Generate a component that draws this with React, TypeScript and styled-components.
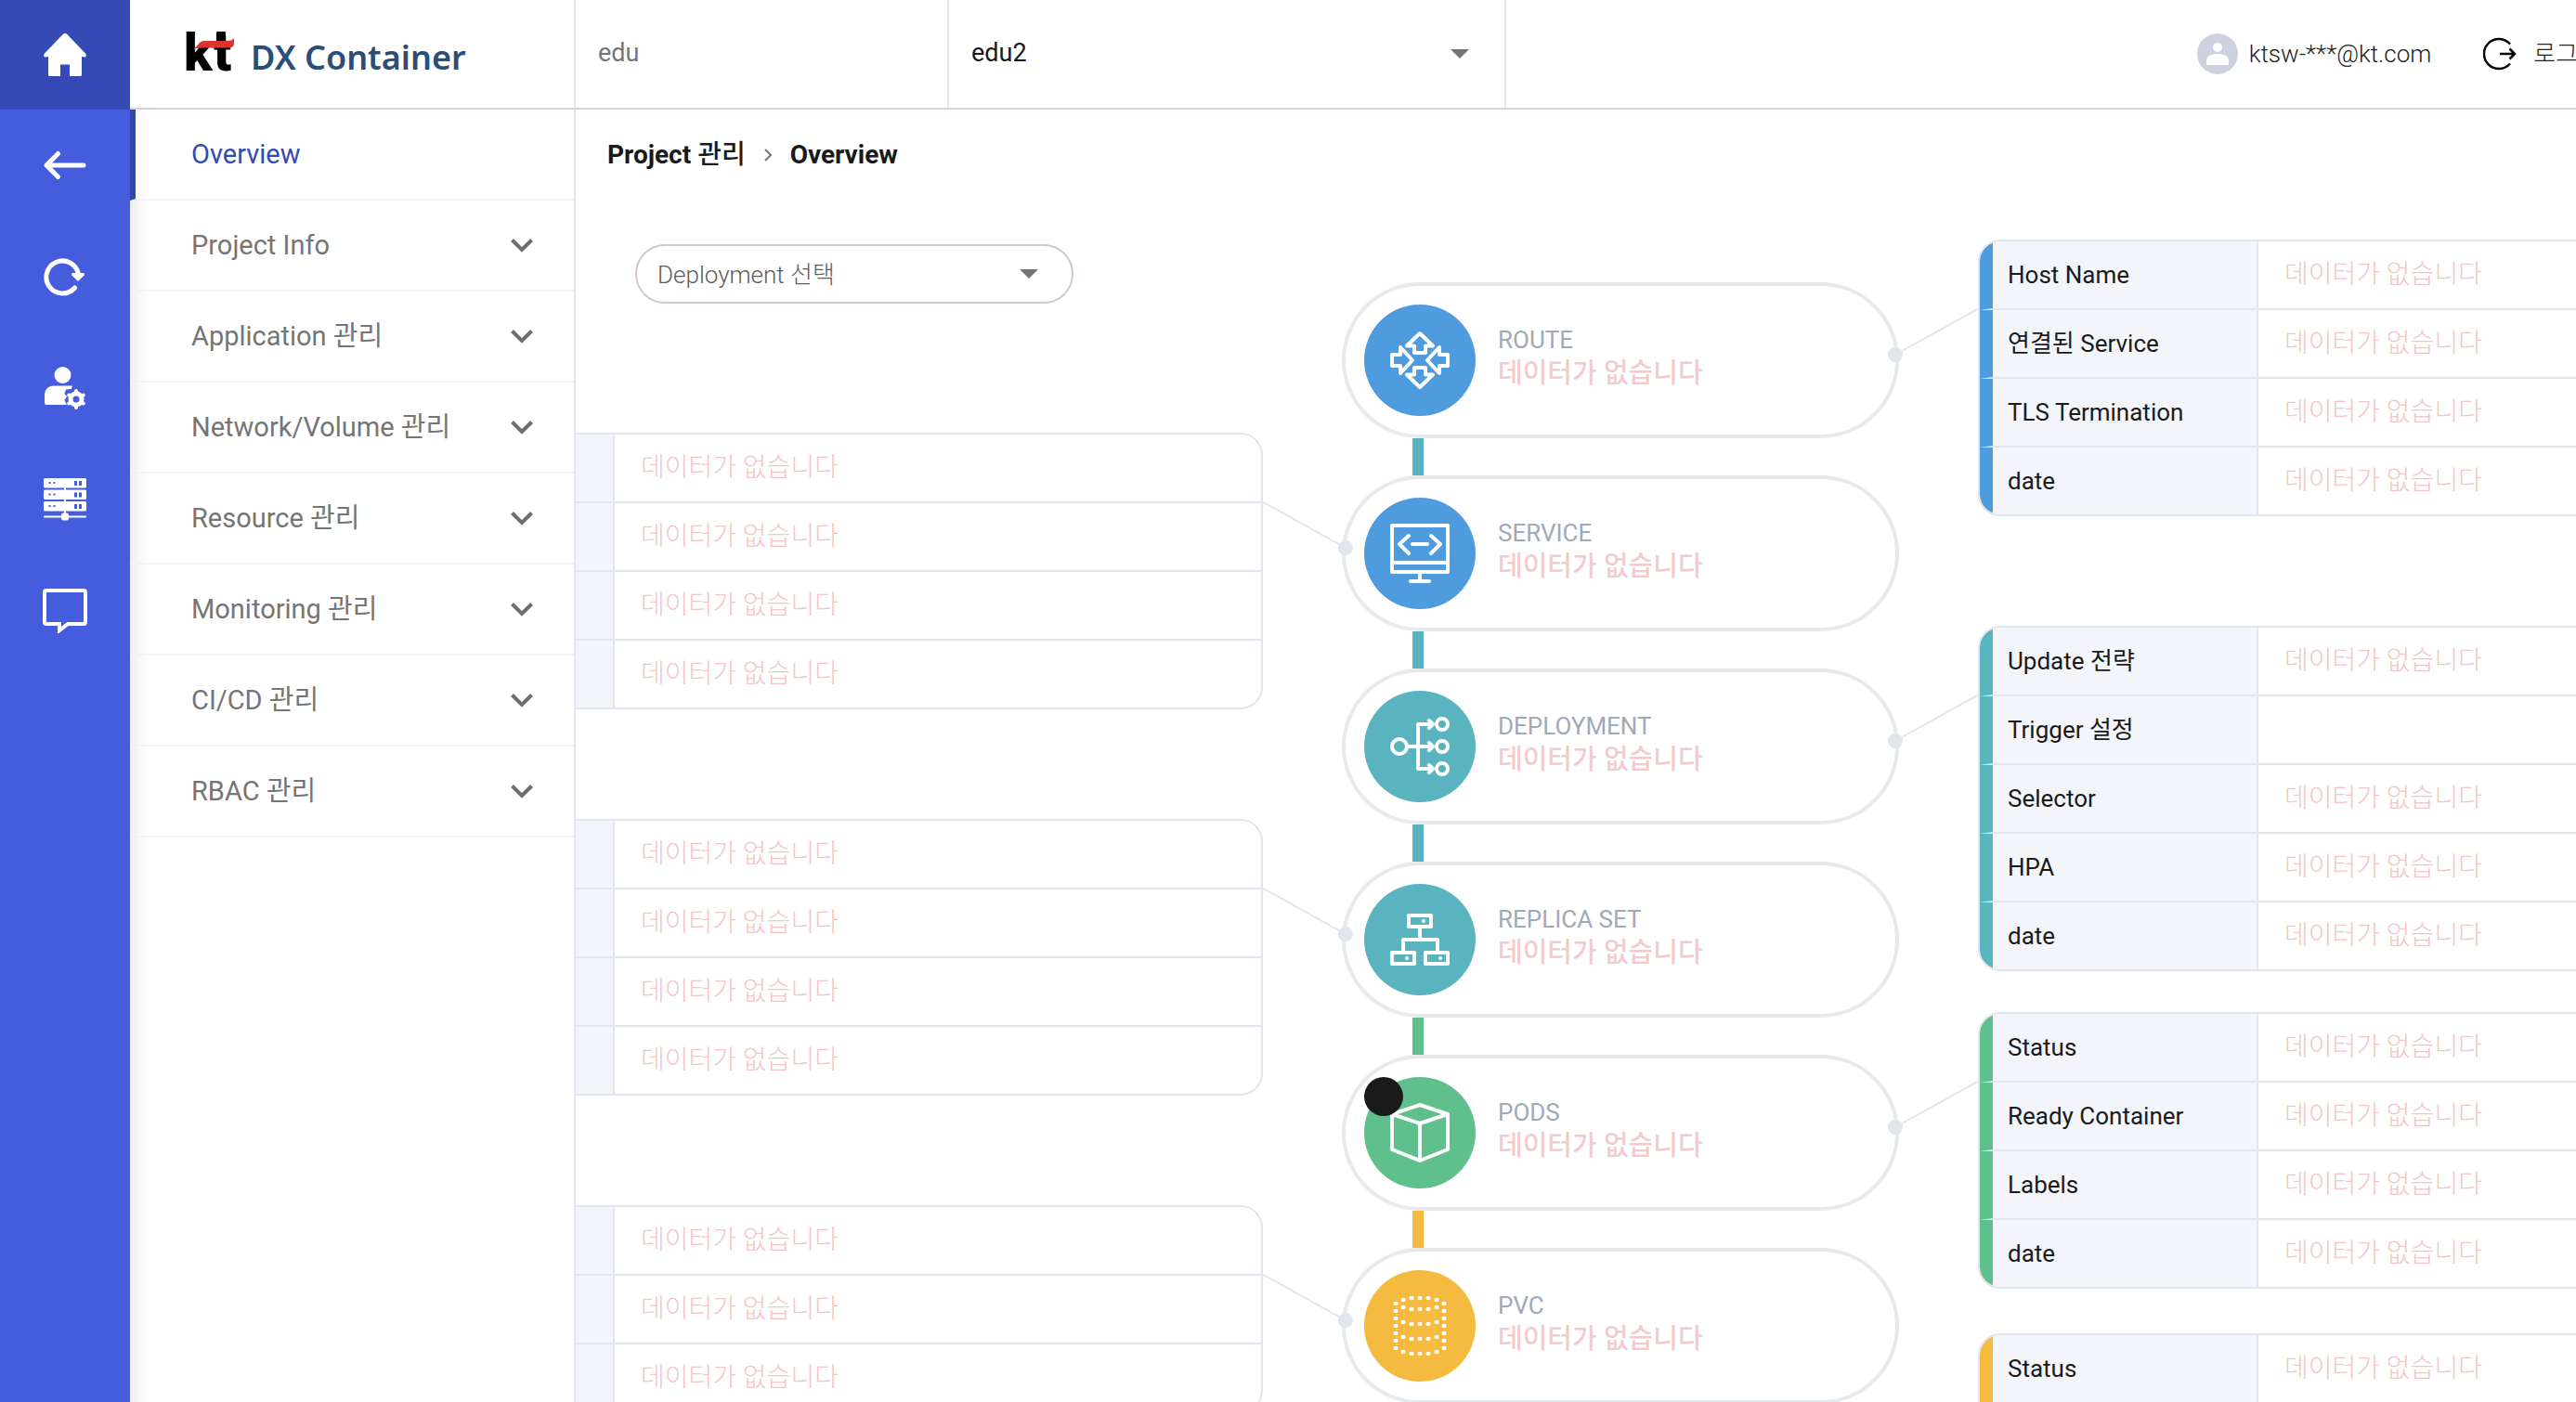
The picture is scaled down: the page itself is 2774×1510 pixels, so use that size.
import React from "react";
import styled, { createGlobalStyle } from "styled-components";

const BLUE = "#4e9bdd";
const TEAL = "#59b4c0";
const GREEN = "#5fbf8d";
const YELLOW = "#f5bb41";
const LINE = "#e0e5ee";
const EMPTY = "데이터가 없습니다";

const GlobalStyle = createGlobalStyle`
  *, *::before, *::after { box-sizing: border-box; }
  body {
    margin: 0;
    background: #fff;
    color: #1a1a1a;
    font-family: Roboto, "Noto Sans CJK KR", sans-serif;
    font-size: 28px;
    line-height: 36px;
  }
  button, select { font: inherit; color: inherit; }
`;

/* ---------- shell ---------- */

const Shell = styled.div`
  display: flex;
  height: 100vh;
  overflow: hidden;
`;

const Rail = styled.nav`
  flex: none;
  width: 140px;
  display: flex;
  flex-direction: column;
  background: #455ddc;
`;

const RailButton = styled.button<{ $home?: boolean }>`
  display: flex;
  align-items: center;
  justify-content: center;
  height: ${(p) => (p.$home ? 118 : 120)}px;
  padding: 0;
  border: 0;
  background: ${(p) => (p.$home ? "#354ab4" : "transparent")};
  color: #fff;
  cursor: pointer;
`;

const Page = styled.div`
  flex: 1;
  min-width: 0;
  display: flex;
  flex-direction: column;
`;

/* ---------- header ---------- */

const Header = styled.header`
  flex: none;
  display: flex;
  min-width: 2740px;
  height: 118px;
  border-bottom: 2px solid #d0d3e0;
`;

const Brand = styled.a`
  display: flex;
  align-items: center;
  gap: 14px;
  width: 480px;
  padding-left: 58px;
  border-right: 2px solid #e4e8ed;
  text-decoration: none;
`;

const BrandName = styled.span`
  padding-top: 8px;
  color: #2b4e78;
  font: 600 36px/48px "Noto Sans", sans-serif;
`;

const Cluster = styled.div`
  display: flex;
  align-items: center;
  width: 402px;
  padding: 0 24px 2px;
  border-right: 2px solid #e4e8ed;
  font-size: 27px;
  color: #757575;
`;

const SelectBox = styled.div`
  position: relative;
  display: flex;
  color: #757575;
`;

const ProjectBox = styled(SelectBox)`
  width: 600px;
  border-right: 2px solid #e4e8ed;
`;

const Caret = styled.svg<{ $right: number }>`
  position: absolute;
  top: 50%;
  right: ${(p) => p.$right}px;
  transform: translateY(-50%);
  pointer-events: none;
`;

const ProjectSelect = styled.select`
  appearance: none;
  flex: 1;
  padding: 0 24px 2px;
  border: 0;
  background: transparent;
  color: #1a1a1a;
  font-size: 27px;
`;

const Account = styled.div`
  display: flex;
  align-items: center;
  gap: 56px;
  margin-left: auto;
  padding-right: 56px;
  font-size: 26px;
  font-weight: 300;
  color: #222;
`;

const User = styled.span`
  display: flex;
  align-items: center;
  gap: 12px;
`;

const Logout = styled.button`
  display: flex;
  align-items: center;
  gap: 18px;
  padding: 0;
  border: 0;
  background: none;
  white-space: nowrap;
  cursor: pointer;
`;

/* ---------- side menu ---------- */

const Body = styled.div`
  flex: 1;
  min-height: 0;
  display: flex;
`;

const SideMenu = styled.aside`
  flex: none;
  width: 480px;
  border-right: 2px solid #e4e8ed;
  background: linear-gradient(to right, #ededed, #fafafa 12px, #fff 24px);
`;

const MenuItem = styled.button<{ $active?: boolean }>`
  display: flex;
  align-items: center;
  justify-content: space-between;
  width: 100%;
  height: 98px;
  padding: 0 44px 0 ${(p) => (p.$active ? 60 : 66)}px;
  border: 0;
  border-bottom: 2px solid #f2f3f8;
  border-left: ${(p) => (p.$active ? "6px solid #3346aa" : "0")};
  background: transparent;
  color: ${(p) => (p.$active ? "#3549b0" : "#757575")};
  font-size: 29px;
  text-align: left;
  cursor: pointer;
`;

/* ---------- main ---------- */

const Main = styled.main`
  flex: 1;
  min-width: 0;
  overflow: hidden;
`;

const Breadcrumb = styled.nav`
  display: flex;
  align-items: center;
  gap: 19px;
  height: 98px;
  padding-left: 34px;
  font-weight: 700;
`;

const Korean = styled.span`
  font-weight: 500;
`;

const Canvas = styled.div`
  display: grid;
  grid-template-columns: minmax(0, 1fr);
  align-items: start;
`;

const DeploymentBox = styled(SelectBox)`
  grid-area: 1 / 1;
  z-index: 1;
  width: 472px;
  height: 64px;
  margin: 47px 0 0 64px;
`;

const DeploymentSelect = styled.select`
  appearance: none;
  flex: 1;
  padding: 2px 22px 0;
  border: 2px solid #d5c7cc;
  border-radius: 32px;
  background: #fff;
  color: #5c5c5c;
  font-size: 26px;
  font-weight: 300;
`;

const Diagram = styled.div`
  grid-area: 1 / 1;
  display: grid;
  grid-template-columns: 1000px 600px 1000px;
  justify-content: center;
  align-items: start;
  gap: 85px;
  padding: 42px 0 0 96px;
`;

const TableColumn = styled.div<{ $offset?: number }>`
  padding-top: ${(p) => p.$offset ?? 0}px;
`;

const Slot = styled.div<{ $height: number }>`
  min-height: ${(p) => p.$height}px;
`;

const DetailTable = styled.table`
  width: 100%;
  table-layout: fixed;
  overflow: hidden;
  border: 2px solid ${LINE};
  border-spacing: 0;
  border-radius: 24px;
`;

const LabelCell = styled.th<{ $accent: string }>`
  width: 300px;
  height: 74px;
  padding: 0 16px;
  border-left: 14px solid ${(p) => p.$accent};
  border-right: 2px solid ${LINE};
  border-bottom: 2px solid ${LINE};
  background: #f3f5fa;
  font-size: 26px;
  font-weight: 400;
  text-align: left;
  tr:last-child > & { height: 72px; border-bottom: 0; }
`;

const ValueCell = styled.td`
  padding: 0 28px;
  border-bottom: 2px solid ${LINE};
  color: #f2c6c6;
  font-weight: 300;
  tr:last-child > & { border-bottom: 0; }
`;

const NodeColumn = styled.div`
  display: flex;
  flex-direction: column;
  padding-top: 46px;
`;

const Connector = styled.div<{ $color: string }>`
  width: 12px;
  height: 40px;
  margin-left: 76px;
  background: ${(p) => p.$color};
`;

const Node = styled.section`
  position: relative;
  display: flex;
  align-items: center;
  gap: 24px;
  height: 168px;
  padding: 0 20px;
  border: 4px solid #e6eaed;
  border-radius: 84px;
`;

const NodeIcon = styled.span<{ $color: string }>`
  position: relative;
  display: flex;
  align-items: center;
  justify-content: center;
  width: 120px;
  height: 120px;
  border-radius: 50%;
  background: ${(p) => p.$color};
`;

const CountBadge = styled.span`
  position: absolute;
  top: 0;
  left: 0;
  width: 42px;
  height: 42px;
  border-radius: 50%;
  background: #1a1a1a;
`;

const NodeText = styled.div`
  padding-bottom: 8px;
`;

const NodeTitle = styled.h2`
  margin: 0;
  color: #a0a9b8;
  font-size: 26px;
  font-weight: 400;
`;

const NodeStatus = styled.p`
  margin: 0;
  color: #f2cccc;
  font-size: 29px;
  font-weight: 500;
`;

const Link = styled.svg<{ $side: "left" | "right" }>`
  position: absolute;
  top: 22px;
  ${(p) => p.$side}: -90px;
`;

/* ---------- drawings ---------- */

const Svg = ({ size = 64, children, sw = 4 }: { size?: number; sw?: number; children: React.ReactNode }) => (
  <svg width={size} height={size} viewBox={`0 0 ${size} ${size}`} fill="none" stroke="#fff" strokeWidth={sw} strokeLinecap="round" strokeLinejoin="round" aria-hidden="true">
    {children}
  </svg>
);

const RouteIcon = () => (
  <Svg>
    <path d="M32 3 46 16.5H38V24H26V16.5H18ZM32 61 46 47.5H38V40H26V47.5H18ZM24 32 11 18V26H2V38H11V46ZM40 32 53 18V26H62V38H53V46Z" />
  </Svg>
);

const ServiceIcon = () => (
  <Svg>
    <rect x="2" y="2" width="60" height="50" />
    <path d="M2 42H62M32 52V62M22 62H42M20 13 10 22 20 32M44 13 54 22 44 32M24 22H40" />
  </Svg>
);

const DeploymentIcon = () => (
  <Svg>
    <circle cx="10" cy="32" r="8" />
    <path d="M20 32H46M46 8H30V56H46M42 4 46 8 42 12M42 28 46 32 42 36M42 52 46 56 42 60" />
    {[8, 32, 56].map((y) => <circle key={y} cx="56" cy={y} r="6" />)}
  </Svg>
);

const ReplicaIcon = () => (
  <Svg>
    <rect x="20" y="6" width="24" height="12" />
    <rect x="2" y="46" width="24" height="12" />
    <rect x="38" y="46" width="24" height="12" />
    <path d="M32 20V32M14 44V32H51V44M36 12h.1M18 52h.1M54 52h.1" />
  </Svg>
);

const PodsIcon = () => (
  <Svg>
    <path d="M32 2 62 12V50L32 62 2 50V12ZM2 12 32 22 62 12M32 22V62" />
  </Svg>
);

const PVC_DOTS: [number, number][] = [
  [14, 4], [23, 2], [32, 2], [41, 2], [50, 4],
  ...[14, 30, 46, 62].flatMap((y): [number, number][] => [[14, y - 2], [23, y], [32, y], [41, y], [50, y - 2]]),
  ...[8, 16, 24, 32, 40, 48, 56].flatMap((y): [number, number][] => [[6, y], [58, y]]),
];

const PvcIcon = () => (
  <Svg>
    {PVC_DOTS.map(([x, y]) => <ellipse key={`${x}-${y}`} cx={x} cy={y} rx="2.6" ry="2.2" fill="#fff" stroke="none" />)}
  </Svg>
);

const HomeIcon = () => (
  <Svg size={48}>
    <path fill="#fff" stroke="none" d="M24 1c1 0 1.700.4 2.300 1L46 22.500c1.600 1.800.600 4-1 4L42 26V45.500c0 .8-.5 1.500-1.500 1.500H29V34.500H19V47H7.500C6.500 47 6 46.300 6 45.500V26l-3 .500c-1.600 0-2.600-2.200-1-4L21.700 2c.6-.6 1.300-1 2.300-1Z" />
  </Svg>
);

const BackIcon = () => (
  <Svg size={48} sw={5}>
    <path d="M44 24H4M16.500 11.500 4 24 16.500 36.500" />
  </Svg>
);

const RefreshIcon = () => (
  <Svg size={48} sw={5}>
    <path d="M34.500 36A17.500 17.500 0 1 1 38.500 21" />
    <path d="M32.500 21.500H43.500L38 27Z" fill="#fff" strokeWidth="3" />
  </Svg>
);

const UserGearIcon = () => (
  <Svg size={48}>
    <circle cx="21.500" cy="10" r="9" fill="#fff" stroke="none" />
    <path d="M2 40V32C2 25.500 6 21.500 12 21.500H32L31 25 25 25.500 23.500 30 26 33 23.500 37 26 42H4Q2 42 2 40Z" fill="#fff" stroke="none" />
    <circle cx="36" cy="36" r="6" strokeWidth="5" />
    {[0, 60, 120, 180, 240, 300].map((a) => (
      <path key={a} d="M36 28.500V27" strokeWidth="4" transform={`rotate(${a} 36 36)`} />
    ))}
  </Svg>
);

const ServerIcon = () => (
  <Svg size={48}>
    {[1, 13.500, 26].map((y) => (
      <g key={y} stroke="none">
        <rect x="1" y={y} width="46" height="10.500" rx="1.500" fill="#fff" />
        <path fill="#455ddc" d={`M6.500 ${y + 4}h2v2h-2zM11.500 ${y + 4}h2v2h-2zM34 ${y + 3}h3v5h-3zM39 ${y + 3}h3v5h-3z`} />
      </g>
    ))}
    <path d="M24 11V42M2 42.500H46" strokeWidth="2" />
    <rect x="20" y="38.500" width="8" height="8" rx="2" fill="#fff" stroke="none" />
  </Svg>
);

const ChatIcon = () => (
  <Svg size={48}>
    <path d="M4 2H44Q46 2 46 4V36Q46 38 44 38H27L18 45V38H4Q2 38 2 36V4Q2 2 4 2Z" strokeLinejoin="miter" />
  </Svg>
);

const KtLogo = () => (
  <svg width="58" height="68" viewBox="0 -10 58 68" role="img" aria-label="kt">
    <text y="42" fill="#000" fontFamily="Roboto, sans-serif" fontSize="56" fontWeight="900">
      <tspan x="0">k</tspan>
      <tspan x="32">t</tspan>
    </text>
    <rect x="35" y="0" width="10" height="20" rx="1" fill="#000" />
    <path d="M11 18.500 17.500 11.500Q19 10 21.500 10H46Q51 10 54 7.500V14Q53 17.500 48 17.500H22Q15 17.500 11 18.500Z" fill="#dc352d" />
  </svg>
);

const Triangle = ({ right }: { right: number }) => (
  <Caret $right={right} width="20" height="10" viewBox="0 0 20 10" aria-hidden="true">
    <path d="M0 0H20L10 10Z" fill="#757575" />
  </Caret>
);

const MenuChevron = () => (
  <svg width="24" height="16" viewBox="0 0 24 16" fill="none" stroke="#6e6e6e" strokeWidth="4" aria-hidden="true">
    <path d="M1.500 2.500 12 13 22.500 2.500" />
  </svg>
);

const CrumbChevron = () => (
  <svg width="10" height="14" viewBox="0 0 10 14" fill="none" stroke="#757575" strokeWidth="2" aria-hidden="true">
    <path d="M2 1 8 7 2 13" />
  </svg>
);

/* ---------- data ---------- */

const RAIL = [
  { label: "뒤로", icon: <BackIcon /> },
  { label: "새로고침", icon: <RefreshIcon /> },
  { label: "사용자 관리", icon: <UserGearIcon /> },
  { label: "서버", icon: <ServerIcon /> },
  { label: "문의", icon: <ChatIcon /> },
];

const MENU = ["Project Info", "Application 관리", "Network/Volume 관리", "Resource 관리", "Monitoring 관리", "CI/CD 관리", "RBAC 관리"];

type Side = "left" | "right";

const NODES: { title: string; color: string; side: Side; icon: React.ReactNode; link?: string; badge?: boolean }[] = [
  { title: "ROUTE", color: BLUE, side: "right", icon: <RouteIcon /> },
  { title: "SERVICE", color: BLUE, side: "left", icon: <ServiceIcon />, link: TEAL },
  { title: "DEPLOYMENT", color: TEAL, side: "right", icon: <DeploymentIcon />, link: TEAL },
  { title: "REPLICA SET", color: TEAL, side: "left", icon: <ReplicaIcon />, link: TEAL },
  { title: "PODS", color: GREEN, side: "right", icon: <PodsIcon />, link: GREEN, badge: true },
  { title: "PVC", color: YELLOW, side: "left", icon: <PvcIcon />, link: YELLOW },
];

const LEFT_TABLES = [BLUE, TEAL, YELLOW];

const RIGHT_TABLES: { color: string; height: number; rows: [string, string][] }[] = [
  { color: BLUE, height: 416, rows: [["Host Name", EMPTY], ["연결된 Service", EMPTY], ["TLS Termination", EMPTY], ["date", EMPTY]] },
  { color: TEAL, height: 416, rows: [["Update 전략", EMPTY], ["Trigger 설정", ""], ["Selector", EMPTY], ["HPA", EMPTY], ["date", EMPTY]] },
  { color: GREEN, height: 346, rows: [["Status", EMPTY], ["Ready Container", EMPTY], ["Labels", EMPTY], ["date", EMPTY]] },
  { color: YELLOW, height: 346, rows: [["Status", EMPTY], ["", ""]] },
];

const Detail = ({ color, rows }: { color: string; rows: [string, string][] }) => (
  <DetailTable>
    <tbody>
      {rows.map(([label, value], i) => (
        <tr key={i}>
          <LabelCell $accent={color} scope="row">{label}</LabelCell>
          <ValueCell>{value}</ValueCell>
        </tr>
      ))}
    </tbody>
  </DetailTable>
);

const NodeLink = ({ side }: { side: Side }) => (
  <Link $side={side} width="100" height="64" viewBox="0 0 100 64" aria-hidden="true">
    {side === "right" ? (
      <>
        <path d="M10 52 100 2" stroke={LINE} strokeWidth="2" />
        <circle cx="10" cy="52" r="8" fill={LINE} />
      </>
    ) : (
      <>
        <path d="M0 2 90 52" stroke={LINE} strokeWidth="2" />
        <circle cx="90" cy="52" r="8" fill={LINE} />
      </>
    )}
  </Link>
);

export default function App() {
  return (
    <Shell>
      <GlobalStyle />
      <Rail>
        <RailButton $home aria-label="홈"><HomeIcon /></RailButton>
        {RAIL.map((item) => (
          <RailButton key={item.label} aria-label={item.label}>{item.icon}</RailButton>
        ))}
      </Rail>
      <Page>
        <Header>
          <Brand href="#">
            <KtLogo />
            <BrandName>DX Container</BrandName>
          </Brand>
          <Cluster>edu</Cluster>
          <ProjectBox>
            <ProjectSelect aria-label="Project" defaultValue="edu2">
              <option>edu2</option>
            </ProjectSelect>
            <Triangle right={38} />
          </ProjectBox>
          <Account>
            <User>
              <svg width="44" height="44" viewBox="0 0 44 44" aria-hidden="true">
                <circle cx="22" cy="22" r="22" fill="#ced2e0" />
                <circle cx="22" cy="15" r="5" fill="#fff" />
                <path d="M10 34V30Q10 22 22 22T34 30V34Z" fill="#fff" />
              </svg>
              ktsw-***@kt.com
            </User>
            <Logout>
              <svg width="36" height="36" viewBox="0 0 36 36" fill="none" stroke="#000" strokeWidth="2.500" aria-hidden="true">
                <path d="M29 7.500A16 16 0 1 0 29 28.500M18 18H34M28.500 12.500 34 18 28.500 23.500" />
              </svg>
              로그아웃
            </Logout>
          </Account>
        </Header>
        <Body>
          <SideMenu>
            <MenuItem $active>Overview</MenuItem>
            {MENU.map((name) => (
              <MenuItem key={name}>
                {name}
                <MenuChevron />
              </MenuItem>
            ))}
          </SideMenu>
          <Main>
            <Breadcrumb>
              <span>Project <Korean>관리</Korean></span>
              <CrumbChevron />
              <span>Overview</span>
            </Breadcrumb>
            <Canvas>
              <DeploymentBox>
                <DeploymentSelect aria-label="Deployment" defaultValue="Deployment 선택">
                  <option>Deployment 선택</option>
                </DeploymentSelect>
                <Triangle right={38} />
              </DeploymentBox>
              <Diagram>
                <TableColumn $offset={208}>
                  {LEFT_TABLES.map((color) => (
                    <Slot key={color} $height={416}>
                      <Detail color={color} rows={[["", EMPTY], ["", EMPTY], ["", EMPTY]].concat(color === YELLOW ? [] : [["", EMPTY]]) as [string, string][]} />
                    </Slot>
                  ))}
                </TableColumn>
                <NodeColumn>
                  {NODES.map((node) => (
                    <React.Fragment key={node.title}>
                      {node.link && <Connector $color={node.link} />}
                      <Node>
                        <NodeIcon $color={node.color}>
                          {node.icon}
                          {node.badge && <CountBadge />}
                        </NodeIcon>
                        <NodeText>
                          <NodeTitle>{node.title}</NodeTitle>
                          <NodeStatus>{EMPTY}</NodeStatus>
                        </NodeText>
                        <NodeLink side={node.side} />
                      </Node>
                    </React.Fragment>
                  ))}
                </NodeColumn>
                <TableColumn>
                  {RIGHT_TABLES.map((table) => (
                    <Slot key={table.color} $height={table.height}>
                      <Detail color={table.color} rows={table.rows} />
                    </Slot>
                  ))}
                </TableColumn>
              </Diagram>
            </Canvas>
          </Main>
        </Body>
      </Page>
    </Shell>
  );
}
